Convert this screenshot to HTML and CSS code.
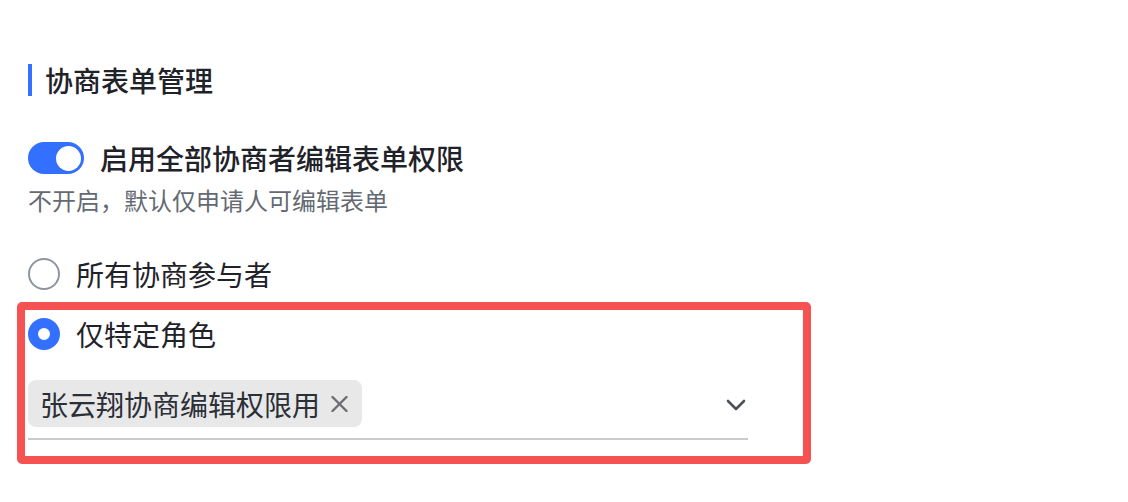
FILE: index.html
```html
<!DOCTYPE html>
<html lang="zh-CN">
<head>
<meta charset="utf-8">
<link rel="stylesheet" href="styles.css">
</head>
<body>
<div class="page">
  <h2 class="section-title">协商表单管理</h2>
  <div class="switch-row">
    <span class="switch"><span class="knob"></span></span>
    <span class="switch-label">启用全部协商者编辑表单权限</span>
  </div>
  <p class="hint">不开启，默认仅申请人可编辑表单</p>
  <div class="radio-row first">
    <span class="radio"></span>
    <span class="radio-label">所有协商参与者</span>
  </div>
  <div class="highlight">
    <div class="radio-row">
      <span class="radio checked"></span>
      <span class="radio-label">仅特定角色</span>
    </div>
    <div class="select">
      <span class="tag">张云翔协商编辑权限用<svg class="tag-close" width="17" height="16" viewBox="0 0 17 16"><path d="M1.5 1 L15.5 15 M15.5 1 L1.5 15" stroke="#6b6d70" stroke-width="2.4" stroke-linecap="round" fill="none"/></svg></span>
      <svg class="chevron" width="20" height="12" viewBox="0 0 20 12"><path d="M2 2 L10 10 L18 2" stroke="#4e5157" stroke-width="2.6" stroke-linecap="round" stroke-linejoin="round" fill="none"/></svg>
    </div>
  </div>
</div>
</body>
</html>
```
FILE: styles.css
```css
html, body {
  margin: 0;
  padding: 0;
  background: #fff;
}
body {
  font-family: "Noto Sans CJK SC", "Noto Sans", sans-serif;
  color: #1f2329;
}
.page {
  padding: 64px 0 0 28px;
}
.section-title {
  margin: 0;
  font-size: 28px;
  font-weight: 500;
  line-height: 32px;
  height: 32px;
  border-left: 4px solid #3370ff;
  padding-left: 13px;
}
.switch-row {
  margin-top: 46px;
  display: flex;
  align-items: center;
  gap: 16px;
  height: 32px;
}
.switch {
  width: 56px;
  height: 32px;
  border-radius: 16px;
  background: #3370ff;
  display: flex;
  align-items: center;
  justify-content: flex-end;
  padding-right: 3px;
  box-sizing: border-box;
}
.knob {
  width: 25px;
  height: 25px;
  border-radius: 50%;
  background: #fff;
}
.switch-label {
  font-size: 28px;
  font-weight: 500;
  line-height: 32px;
}
.hint {
  margin: 10px 0 0;
  font-size: 24px;
  line-height: 32px;
  color: #646a73;
}
.radio-row {
  display: flex;
  align-items: center;
  gap: 16px;
  height: 32px;
}
.radio-row.first {
  margin-top: 42px;
}
.radio {
  width: 32px;
  height: 32px;
  border-radius: 50%;
  border: 2px solid #8f959e;
  box-sizing: border-box;
  background: #fff;
}
.radio.checked {
  border: 10px solid #3370ff;
}
.radio-label {
  font-size: 28px;
  line-height: 32px;
}
.highlight {
  margin-top: 12px;
  margin-left: -11px;
  width: 794px;
  box-sizing: border-box;
  border: 8px solid #f75252;
  border-radius: 5px;
  padding: 8px 0 16px 3px;
}
.select {
  margin-top: 30px;
  width: 720px;
  display: flex;
  align-items: center;
  justify-content: space-between;
  padding-bottom: 11px;
  padding-right: 2px;
  box-sizing: border-box;
  border-bottom: 2px solid #c9cacc;
}
.tag {
  display: flex;
  align-items: center;
  gap: 11px;
  height: 47px;
  padding: 0 14px 0 12px;
  background: #e8e8e9;
  border-radius: 8px;
  font-size: 28px;
  color: #2b2f36;
}
.chevron {
  margin-top: 2px;
}
```
